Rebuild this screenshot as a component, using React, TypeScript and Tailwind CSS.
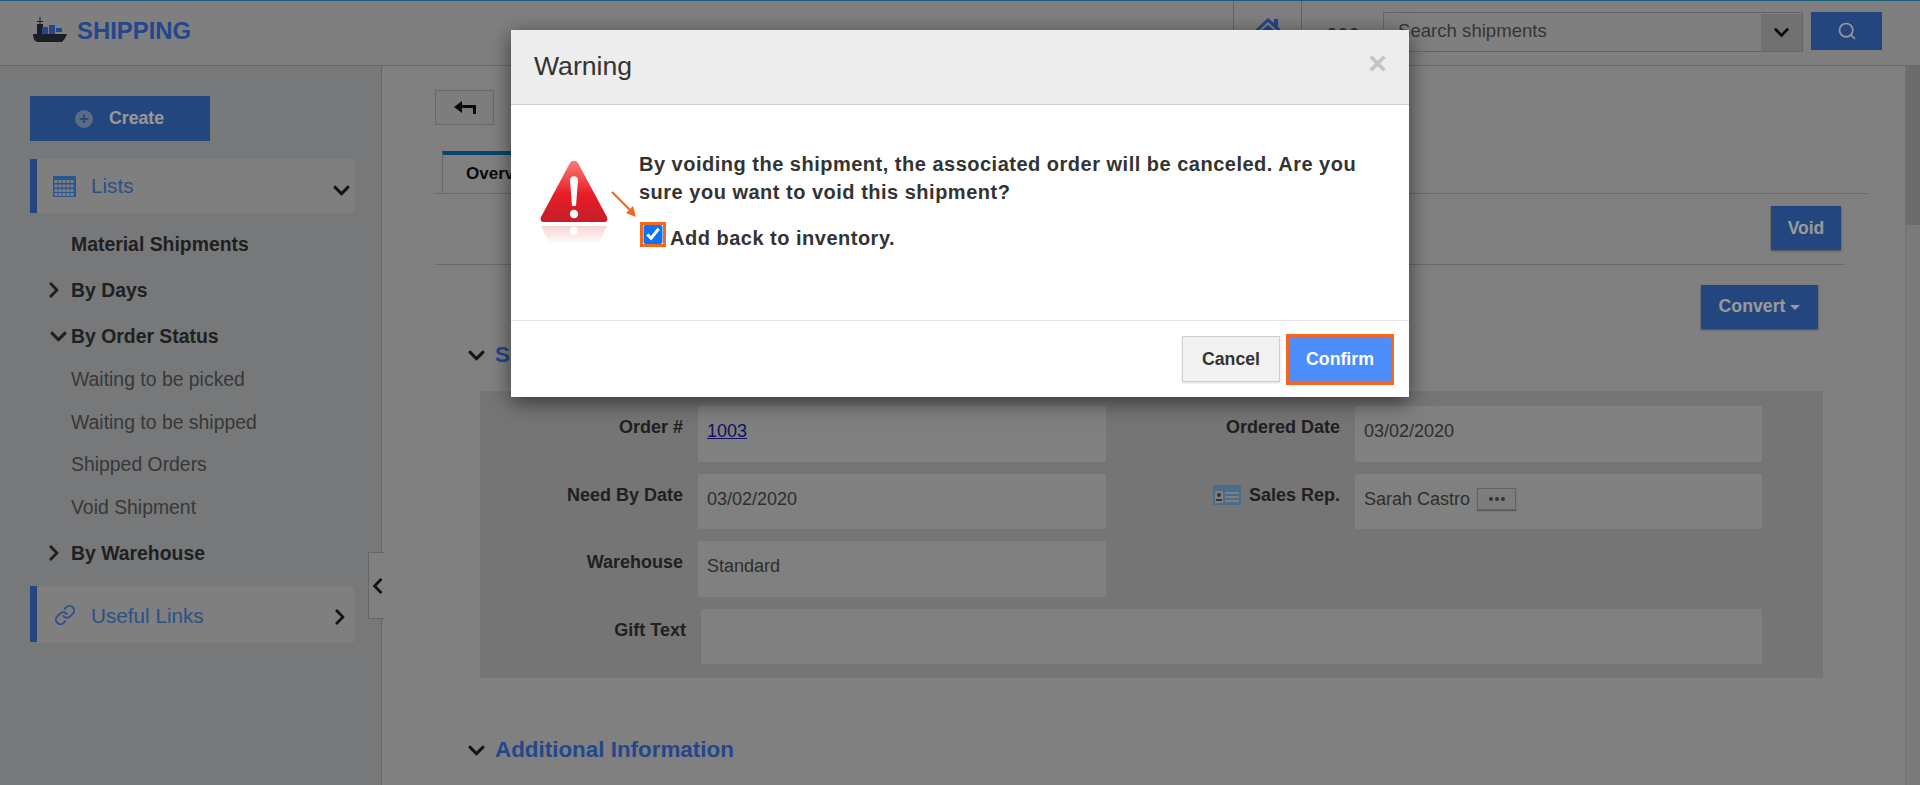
import { Search, Link as LinkIcon } from 'lucide-react'
import { FaChevronDown, FaChevronLeft, FaChevronRight } from 'react-icons/fa'

function ShipLogo() {
  return (
    <svg width="36" height="26" viewBox="0 0 36 26">
      <path d="M1 17h34c-1 3-3 6-5 8H6c-3 0-5-3-5-8z" fill="#2c3440" />
      <rect x="5" y="7" width="6" height="10" fill="#2c3440" />
      <rect x="7.5" y="0" width="1" height="7" fill="#2c3440" />
      <rect x="5" y="4" width="6" height="1" fill="#2c3440" />
      <rect x="10" y="10" width="6" height="7" fill="#3c76e9" />
      <rect x="17" y="8" width="6" height="9" fill="#3c76e9" />
      <rect x="24" y="11" width="6" height="4" fill="#3c76e9" />
    </svg>
  )
}

function CalendarIcon() {
  return (
    <svg width="23" height="21" viewBox="0 0 23 21">
      <rect width="23" height="21" fill="#4a90f0" />
      {[4, 8.5, 13, 17].map(y =>
        [1.5, 5.5, 9.5, 13.5, 17.5].map(x => (
          <rect key={`${x}-${y}`} x={x} y={y} width="3" height="3" fill="#d4d4d4" />
        ))
      )}
    </svg>
  )
}

function BackArrow() {
  return (
    <svg width="22" height="14" viewBox="0 0 22 14">
      <path d="M0 6l8-6v4h14v9h-3V7H8v5z" fill="#111" />
    </svg>
  )
}

function WarningIcon() {
  return (
    <svg width="68" height="86" viewBox="0 0 68 86">
      <defs>
        <linearGradient id="tri" x1="0" y1="0" x2="0" y2="1">
          <stop offset="0" stopColor="#f77f76" />
          <stop offset="0.55" stopColor="#e81c26" />
          <stop offset="1" stopColor="#c41f2a" />
        </linearGradient>
        <linearGradient id="refl" x1="0" y1="0" x2="0" y2="1">
          <stop offset="0" stopColor="#f9d4d4" />
          <stop offset="1" stopColor="#ffffff" />
        </linearGradient>
      </defs>
      <path d="M30 3c2-3 6-3 8 0l29 54c1 3 0 5-3 5H4c-3 0-4-2-3-5z" fill="url(#tri)" />
      <path d="M30 20c0-5 8-5 8 0l-2 26h-4z" fill="#fff" />
      <circle cx="34" cy="54" r="4.2" fill="#fff" />
      <path d="M1 66h66l-8 17c-12 2-38 2-50 0z" fill="url(#refl)" />
      <circle cx="34" cy="71" r="4" fill="#fff" />
    </svg>
  )
}

function CardIcon() {
  return (
    <svg width="28" height="20" viewBox="0 0 28 20">
      <rect width="28" height="20" fill="#7fb6e6" />
      <rect x="2" y="6" width="8" height="12" fill="#d5d5d5" />
      <circle cx="6" cy="10" r="2" fill="#555" />
      <rect x="3" y="14" width="6" height="2" fill="#555" />
      <rect x="12" y="7" width="14" height="2" fill="#d5d5d5" />
      <rect x="12" y="11" width="14" height="2" fill="#d5d5d5" />
      <rect x="12" y="15" width="14" height="2" fill="#d5d5d5" />
    </svg>
  )
}

function SideLink({ children }: { children: string }) {
  return <div className="pl-[71px] text-[19.4px] leading-[24px] text-[#5e5e5e]">{children}</div>
}

function SideGroup({ children, open }: { children: string; open?: boolean }) {
  return (
    <div className="flex items-center text-[19.4px] leading-[24px] font-bold text-[#363636]">
      {open ? (
        <span className="w-[71px] flex justify-end pr-[3px] text-[#333]"><FaChevronDown size={19} /></span>
      ) : (
        <span className="w-[71px] flex justify-end pr-[8px] text-[#333]"><FaChevronRight size={18} /></span>
      )}
      {children}
    </div>
  )
}

function Label({ children }: { children: React.ReactNode }) {
  return <div className="text-right text-[18px] leading-[24px] font-bold text-[#363636] pt-[9px]">{children}</div>
}

function Value({ children }: { children: React.ReactNode }) {
  return <div className="bg-[#d5d5d5] h-full pl-[9px] pt-[13px] text-[18px] leading-[24px] text-[#4e4e4e]">{children}</div>
}

export default function App() {
  return (
    <div className="relative h-[785px] w-[1920px] overflow-hidden bg-[#d5d5d5] font-['Liberation_Sans',Arial,sans-serif]">
      {/* page behind the dialog */}
      <header className="h-[66px] flex items-center border-t border-b border-t-[#2a9bd0] border-b-[#b0b0b0] bg-[#d4d4d4]">
        <div className="pl-[32px] mb-[5px] flex items-center gap-[9px] text-[23.9px] font-bold text-[#3c76e9]">
          <ShipLogo />
          SHIPPING
        </div>
        <div className="ml-auto flex items-center h-full">
          <div className="w-[69px] h-full border-x border-[#a5a5a5] flex justify-center pt-[15px]">
            <svg width="32" height="28" viewBox="0 0 32 28">
              <path d="M16 2L1 16h4L16 6l11 10h4L26 11V3h-4v4z" fill="#3c76e9" />
              <path d="M8 16l8-7 8 7v12H8z" fill="#3c76e9" />
            </svg>
          </div>
          <div className="w-[81px] flex justify-center gap-[3px] mt-[-2px]">
            <span className="w-[8px] h-[8px] rounded-full bg-[#555]" />
            <span className="w-[8px] h-[8px] rounded-full bg-[#555]" />
            <span className="w-[8px] h-[8px] rounded-full bg-[#555]" />
          </div>
          <div className="w-[420px] h-[40px] mb-[2px] border border-[#a8a8a8] flex items-center">
            <span className="pl-[14px] flex-1 mt-[-2px] text-[18.6px] text-[#5a5a5a]">Search shipments</span>
            <span className="w-[41px] h-[37px] bg-[#bcbcbc] flex items-center justify-center text-[#111]">
              <FaChevronDown size={17} />
            </span>
          </div>
          <div className="ml-[8px] mb-[4px] w-[71px] h-[38px] bg-[#3c75d2] flex items-center justify-center text-[#ffffff]">
            <Search size={20} strokeWidth={2} />
          </div>
          <div className="w-[38px]" />
        </div>
      </header>

      <div className="flex h-[719px]">
        <aside className="relative w-[382px] shrink-0 border-r border-[#a8a8a8] bg-[#c5c8cb] pt-[30px]">
          <div className="ml-[30px] w-[180px] h-[45px] bg-[#3c75d2] flex items-center pl-[45px] gap-[16px] text-[17.7px] font-bold text-[#ffffff]">
            <span className="w-[18px] h-[18px] rounded-full bg-[#9db4da] flex items-center justify-center text-[17px] leading-none text-[#3c75d2]">+</span>
            Create
          </div>
          <div className="ml-[30px] mt-[18px] w-[324px] h-[54px] bg-[#d4d4d4] border-l-[7px] border-[#3c75d2] flex items-center pl-[16px]">
            <CalendarIcon />
            <span className="ml-[15px] text-[20.7px] text-[#4a86e0]">Lists</span>
            <span className="ml-auto mr-[3px] mt-[8px] text-[#222]"><FaChevronDown size={19} /></span>
          </div>
          <div className="mt-[19px] pl-[71px] text-[19.4px] leading-[24px] font-bold text-[#363636]">Material Shipments</div>
          <div className="mt-[22px]"><SideGroup>By Days</SideGroup></div>
          <div className="mt-[22px]"><SideGroup open>By Order Status</SideGroup></div>
          <div className="mt-[19px]"><SideLink>Waiting to be picked</SideLink></div>
          <div className="mt-[19px]"><SideLink>Waiting to be shipped</SideLink></div>
          <div className="mt-[18px]"><SideLink>Shipped Orders</SideLink></div>
          <div className="mt-[19px]"><SideLink>Void Shipment</SideLink></div>
          <div className="mt-[22px]"><SideGroup>By Warehouse</SideGroup></div>
          <div className="ml-[30px] mt-[21px] w-[324px] h-[56px] bg-[#d4d4d4] border-l-[7px] border-[#3c75d2] flex items-center pl-[17px]">
            <LinkIcon size={22} strokeWidth={2} className="text-[#4a86e0] mt-[2px]" />
            <span className="ml-[15px] mt-[3px] text-[20.7px] text-[#4a86e0]">Useful Links</span>
            <span className="ml-auto mr-[5px] mt-[5px] text-[#222]"><FaChevronRight size={18} /></span>
          </div>
          <div className="absolute left-[368px] top-[486px] w-[16px] h-[67px] bg-[#d5d5d5] border border-r-0 border-[#a8a8a8] flex items-center justify-center text-[#222]">
            <FaChevronLeft size={18} className="ml-[2px]" />
          </div>
        </aside>

        <main className="flex-1 pl-[53px] pt-[24px]">
          <div className="w-[59px] h-[35px] border border-[#adadad] bg-[#d0d0d0] flex items-center justify-center">
            <BackArrow />
          </div>
          <div className="mt-[26px] w-[1433px] h-[43px] border-b border-[#b0b0b0] pl-[7px]">
            <div className="w-[200px] h-[43px] border-t-4 border-l border-t-[#0d76b8] border-l-[#b0b0b0] pl-[23px] pt-[6px] text-[17px] font-bold text-[#111]">Overview</div>
          </div>
          <div className="mt-[12px] w-[1406px] flex justify-end">
            <div className="w-[70px] h-[44px] bg-[#3c75d2] shadow-[0_1px_2px_rgba(0,0,0,0.4)] flex items-center justify-center text-[17.5px] font-bold text-[#ffffff]">Void</div>
          </div>
          <div className="mt-[14px] w-[1410px] border-t border-[#b0b0b0]" />
          <div className="mt-[20px] w-[1383px] flex justify-end">
            <div className="w-[117px] h-[44px] bg-[#3c75d2] shadow-[0_1px_2px_rgba(0,0,0,0.4)] flex items-center justify-center gap-[5px] pb-[2px] text-[17.7px] font-bold text-[#ffffff]">
              Convert
              <span className="w-0 h-0 border-x-[5px] border-t-[5px] border-x-transparent border-t-white mt-[2px]" />
            </div>
          </div>
          <div className="mt-[11px] pl-[32px] flex items-center gap-[9px] h-[30px] text-[22.4px] font-bold text-[#3c76e9]">
            <span className="text-[#222]"><FaChevronDown size={19} /></span>
            Shipment Details
          </div>
          <div className="ml-[45px] mt-[21px] w-[1343px] bg-[#c3c3c3] pt-[15px] pb-[14px]">
            <div className="grid grid-cols-[203px_408px_219px_407px] grid-rows-[56px_55px_56px] gap-x-[15px] gap-y-[12px]">
              <Label>Order #</Label>
              <Value><span className="underline text-[#1f1fa8]">1003</span></Value>
              <Label>Ordered Date</Label>
              <Value>03/02/2020</Value>
              <Label>Need By Date</Label>
              <Value>03/02/2020</Value>
              <Label>
                <span className="inline-flex items-center gap-[8px]"><CardIcon />Sales Rep.</span>
              </Label>
              <Value>
                <span className="inline-flex items-center gap-[7px]">
                  Sarah Castro
                  <span className="w-[39px] h-[22px] border border-[#a5a5a5] bg-[#d0d0d0] shadow-[0_1px_1px_rgba(0,0,0,0.3)] flex items-center justify-center gap-[2px]">
                    <span className="w-[4px] h-[4px] rounded-full bg-[#555]" />
                    <span className="w-[4px] h-[4px] rounded-full bg-[#555]" />
                    <span className="w-[4px] h-[4px] rounded-full bg-[#555]" />
                  </span>
                </span>
              </Value>
              <Label>Warehouse</Label>
              <Value>Standard</Value>
              <div />
              <div />
            </div>
            <div className="mt-[12px] flex">
              <div className="w-[206px]"><Label>Gift Text</Label></div>
              <div className="ml-[15px] w-[1061px] h-[55px] bg-[#d5d5d5]" />
            </div>
          </div>
          <div className="mt-[57px] pl-[32px] flex items-center gap-[9px] h-[30px] text-[22.4px] font-bold text-[#3c76e9]">
            <span className="text-[#222]"><FaChevronDown size={19} /></span>
            Additional Information
          </div>
        </main>

        <div className="w-[15px] shrink-0 bg-[#cbcbcb] border-l border-[#bdbdbd]">
          <div className="h-[159px] bg-[#b4b4b4]" />
        </div>
      </div>

      {/* backdrop */}
      <div className="absolute inset-0 bg-black/40" />

      {/* dialog */}
      <div className="absolute left-[511px] top-[30px] w-[898px] h-[367px] bg-white flex flex-col shadow-[0_5px_20px_rgba(0,0,0,0.55)]">
        <div className="h-[75px] shrink-0 bg-[#ededed] border-b border-[#cfcfcf] flex items-center justify-between pl-[23px] pr-[22px]">
          <span className="text-[26.6px] text-[#333]">Warning</span>
          <span className="text-[32px] font-bold text-[#c4c4c4] leading-none mt-[-9px]">×</span>
        </div>
        <div className="relative flex-1 flex pl-[29px] pt-[45px]">
          <div className="mt-[10px] w-[68px] shrink-0"><WarningIcon /></div>
          <div className="ml-[31px] w-[745px]">
            <div className="text-[20px] leading-[28px] font-bold tracking-[0.5px] text-[#333]">
              By voiding the shipment, the associated order will be canceled. Are you sure you want to void this shipment?
            </div>
            <div className="flex mt-[16px] pl-[1px] text-[20px] leading-[28px] font-bold tracking-[0.5px] text-[#333]">
              <span className="w-[26px] h-[25px] border-[3px] border-[#f4671f] flex items-center justify-center">
                <input type="checkbox" checked readOnly className="w-[20px] h-[19px] m-0 accent-[#0a72f5]" />
              </span>
              <span className="ml-[4px] mt-[2px]">Add back to inventory.</span>
            </div>
          </div>
          <svg className="absolute left-[100px] top-[86px]" width="28" height="28" viewBox="0 0 28 28">
            <path d="M1 1l21 21" stroke="#f4671f" strokeWidth="2.2" />
            <path d="M25 26l-10-4 7-7z" fill="#f4671f" />
          </svg>
        </div>
        <div className="h-[77px] shrink-0 border-t border-[#e5e5e5] flex items-center justify-end pr-[15px] gap-[6px]">
          <div className="w-[98px] h-[46px] bg-[#f2f2f2] border border-[#cfcfcf] shadow-[0_1px_2px_rgba(0,0,0,0.15)] flex items-center justify-center text-[17.7px] font-bold text-[#333]">Cancel</div>
          <div className="w-[108px] h-[51px] bg-[#4d8dfb] border-[3px] border-[#f4671f] flex items-center justify-center text-[17.7px] font-bold text-white">Confirm</div>
        </div>
      </div>
    </div>
  )
}
